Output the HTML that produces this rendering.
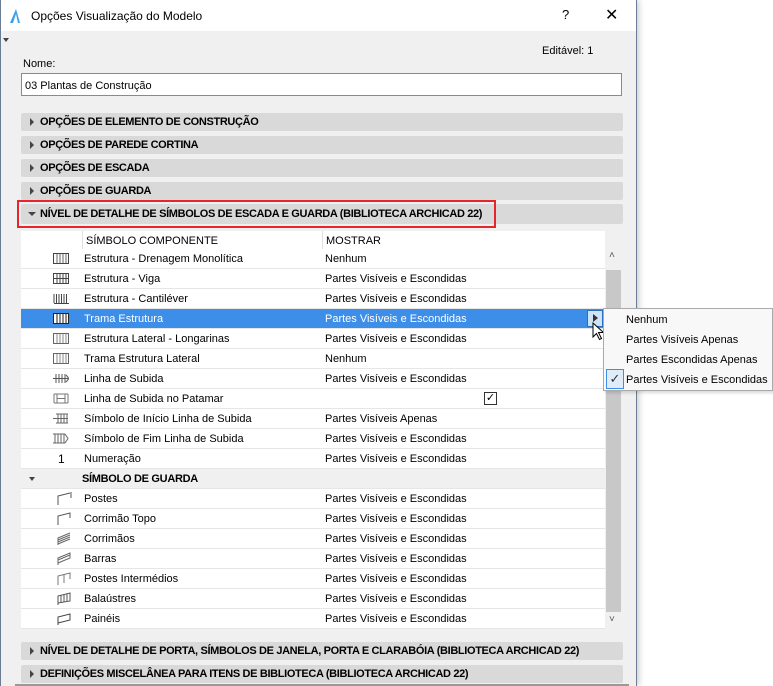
<!DOCTYPE html>
<html><head><meta charset="utf-8"><style>
*{margin:0;padding:0;box-sizing:border-box}
body{width:773px;height:686px;background:#fff;font-family:"Liberation Sans",sans-serif;font-size:11px;color:#000;position:relative;overflow:hidden}
.win{position:absolute;left:0;top:0;width:637px;height:686px;background:#f0f0f0;border-left:1px solid #6a7d95;border-right:1px solid #6a7d95;box-shadow:2px 0 6px rgba(0,0,0,.2)}
.title{position:absolute;left:0;top:0;width:635px;height:31px;background:#fff;font-size:12px}
.abs{position:absolute;white-space:nowrap}
.sec{position:absolute;left:20px;width:602px;height:18px;background:#d9d9d9;border-radius:2px;font-weight:bold;font-size:11px;line-height:19px;padding-left:19px;letter-spacing:-0.35px}
.sec:before{content:"";position:absolute;left:9px;top:5px;border-left:4px solid #444;border-top:4px solid transparent;border-bottom:4px solid transparent}
.sec.open:before{left:7px;top:8px;border-top:4px solid #444;border-left:4px solid transparent;border-right:4px solid transparent;border-bottom:0}
.row{position:absolute;left:20px;width:584px;height:20px;background:#fff;border-bottom:1px solid #e6e6e6;line-height:21px}
.row .n{position:absolute;left:63px}
.row .v{position:absolute;left:304px}
.row .ic{position:absolute;left:32px;top:4px;width:16px;height:11px}
.sel{background:#3d8ee8;color:#fff}
</style></head><body>
<div class="win">
<div class="title">
 <svg class="abs" style="left:7px;top:8px" width="14" height="16"><path d="M2 15 L8 1 L12 15 Z" fill="#3aa0e8"/><path d="M5 15 L8 6 L10 15Z" fill="#fff"/></svg>
 <div class="abs" style="left:30px;top:9px">Opções Visualização do Modelo</div>
 <div class="abs" style="left:561px;top:7px;font-size:13px">?</div>
 <div class="abs" style="left:604px;top:5px;font-size:16px">✕</div>
</div>
<div class="abs" style="left:2px;top:38px;border-top:4px solid #444;border-left:3px solid transparent;border-right:3px solid transparent"></div>
<div class="abs" style="left:541px;top:45px">Editável: 1</div>
<div class="abs" style="left:22px;top:58px">Nome:</div>
<div class="abs" style="left:20px;top:73px;width:601px;height:23px;background:#fff;border:1px solid #8a8a8a;padding:6px 0 0 3px">03 Plantas de Construção</div>
<div class="sec" style="top:113px">OPÇÕES DE ELEMENTO DE CONSTRUÇÃO</div>
<div class="sec" style="top:136px">OPÇÕES DE PAREDE CORTINA</div>
<div class="sec" style="top:159px">OPÇÕES DE ESCADA</div>
<div class="sec" style="top:182px">OPÇÕES DE GUARDA</div>
<div class="sec open" style="top:204px;height:20px;line-height:21px">NÍVEL DE DETALHE DE SÍMBOLOS DE ESCADA E GUARDA (BIBLIOTECA ARCHICAD 22)</div>
<div class="abs" style="left:16px;top:200px;width:479px;height:28px;border:2px solid #e8252a"></div>
<div class="abs" style="left:20px;top:231px;width:584px;height:398px;background:#fff"></div>
<div class="abs" style="left:20px;top:231px;width:584px;height:18px;background:#fff;line-height:20px"><span class="abs" style="left:61px;border-left:1px solid #e0e0e0;padding-left:3px">SÍMBOLO COMPONENTE</span><span class="abs" style="left:301px;border-left:1px solid #e0e0e0;padding-left:3px">MOSTRAR</span></div>
<div class="abs" style="left:604px;top:249px;width:16px;height:380px;background:#f0f0f0"></div>
<div class="abs" style="left:605px;top:270px;width:15px;height:342px;background:#c8c8c8"></div>
<div class="abs" style="left:608px;top:250px;font-size:10px;color:#555">˄</div>
<div class="abs" style="left:608px;top:614px;font-size:10px;color:#555">˅</div>

<div class="row" style="top:249px"><svg class="ic"><rect x="0.5" y="0.5" width="15" height="10" fill="none" stroke="#444"/><path d="M4 1v9M7 1v9M10 1v9M13 1v9" stroke="#666"/></svg><span class="n">Estrutura - Drenagem Monolítica</span><span class="v">Nenhum</span></div>
<div class="row" style="top:269px"><svg class="ic"><rect x="0.5" y="0.5" width="15" height="10" fill="none" stroke="#444"/><path d="M4 1v9M7 1v9M10 1v9M13 1v9M0 5.5h16" stroke="#444"/></svg><span class="n">Estrutura - Viga</span><span class="v">Partes Visíveis e Escondidas</span></div>
<div class="row" style="top:289px"><svg class="ic"><path d="M1 1v9M3.5 1v9M6 1v9M8.5 1v9M11 1v9M13.5 1v9M1 10.5h15" stroke="#444"/></svg><span class="n">Estrutura - Cantiléver</span><span class="v">Partes Visíveis e Escondidas</span></div>
<div class="row sel" style="top:309px"><svg class="ic"><rect x="0.5" y="0.5" width="15" height="10" fill="#fff" stroke="#222"/><path d="M4 1v9M7 1v9M10 1v9M13 1v9" stroke="#222"/></svg><span class="n">Trama Estrutura</span><span class="v">Partes Visíveis e Escondidas</span>
 <span class="abs" style="left:566px;top:1px;width:16px;height:17px;background:#cfe3f7;border:1px solid #2a6fc4"></span><span class="abs" style="left:572px;top:5px;border-left:5px solid #333;border-top:4px solid transparent;border-bottom:4px solid transparent"></span></div>
<div class="row" style="top:329px"><svg class="ic"><rect x="0.5" y="0.5" width="15" height="10" fill="none" stroke="#666"/><path d="M4 1v9M7 1v9M10 1v9M13 1v9" stroke="#888"/></svg><span class="n">Estrutura Lateral - Longarinas</span><span class="v">Partes Visíveis e Escondidas</span></div>
<div class="row" style="top:349px"><svg class="ic"><rect x="0.5" y="0.5" width="15" height="10" fill="none" stroke="#666"/><path d="M4 1v9M7 1v9M10 1v9M13 1v9" stroke="#888"/></svg><span class="n">Trama Estrutura Lateral</span><span class="v">Nenhum</span></div>
<div class="row" style="top:369px"><svg class="ic"><path d="M3 1v9M6 1v9M9 1v9M12 1v9M0 5.5h15M13 2l3 3.5-3 3.5" stroke="#555" fill="none"/></svg><span class="n">Linha de Subida</span><span class="v">Partes Visíveis e Escondidas</span></div>
<div class="row" style="top:389px"><svg class="ic"><path d="M1 1v9M4 1v9M12 1v9M15 1v9M1 1h14M1 10h14M4 5.5h8" stroke="#777" fill="none"/></svg><span class="n">Linha de Subida no Patamar</span><span class="abs" style="left:463px;top:3px;width:13px;height:13px;border:1px solid #333;font-size:11px;line-height:11px;text-align:center">✓</span></div>
<div class="row" style="top:409px"><svg class="ic"><path d="M5 1v9M8 1v9M11 1v9M14 1v9M3 1h12M3 10h12M0 5.5h15" stroke="#666" fill="none"/></svg><span class="n">Símbolo de Início Linha de Subida</span><span class="v">Partes Visíveis Apenas</span></div>
<div class="row" style="top:429px"><svg class="ic"><path d="M2 1v9M5 1v9M8 1v9M11 1v9M0 1h12M0 10h12M12 1l3 4.5-3 4.5" stroke="#666" fill="none"/></svg><span class="n">Símbolo de Fim Linha de Subida</span><span class="v">Partes Visíveis e Escondidas</span></div>
<div class="row" style="top:449px"><span class="abs" style="left:37px;font-size:12px">1</span><span class="n">Numeração</span><span class="v">Partes Visíveis e Escondidas</span></div>
<div class="row" style="top:469px;background:#f0f0f0;font-weight:bold;letter-spacing:-0.3px"><span class="abs" style="left:8px;top:8px;border-top:4px solid #444;border-left:3px solid transparent;border-right:3px solid transparent"></span><span class="abs" style="left:61px">SÍMBOLO DE GUARDA</span></div>
<div class="row" style="top:489px"><svg class="ic" style="left:36px;top:3px;height:13px"><path d="M1 13V4L13 1M14 0v6" stroke="#555" fill="none"/></svg><span class="n">Postes</span><span class="v">Partes Visíveis e Escondidas</span></div>
<div class="row" style="top:509px"><svg class="ic" style="left:36px;top:3px;height:13px"><path d="M1 13V4L13 1v5" stroke="#555" fill="none"/></svg><span class="n">Corrimão Topo</span><span class="v">Partes Visíveis e Escondidas</span></div>
<div class="row" style="top:529px"><svg class="ic" style="left:36px;top:3px;height:13px"><path d="M1 13V6L13 1M1 8L13 3M1 10L13 5M1 12L13 7" stroke="#666" fill="none"/></svg><span class="n">Corrimãos</span><span class="v">Partes Visíveis e Escondidas</span></div>
<div class="row" style="top:549px"><svg class="ic" style="left:36px;top:3px;height:13px"><path d="M1 13V6L13 1v5L1 11M1 8L13 3" stroke="#666" fill="none"/></svg><span class="n">Barras</span><span class="v">Partes Visíveis e Escondidas</span></div>
<div class="row" style="top:569px"><svg class="ic" style="left:36px;top:3px;height:13px"><path d="M1 13V4L13 1v6M7 3v8" stroke="#777" fill="none"/></svg><span class="n">Postes Intermédios</span><span class="v">Partes Visíveis e Escondidas</span></div>
<div class="row" style="top:589px"><svg class="ic" style="left:36px;top:3px;height:13px"><path d="M1 13V4L13 1v8L1 11M4 3v8M7 2.5v8M10 2v8" stroke="#555" fill="none"/></svg><span class="n">Balaústres</span><span class="v">Partes Visíveis e Escondidas</span></div>
<div class="row" style="top:609px"><svg class="ic" style="left:36px;top:3px;height:13px"><path d="M1 13V5L13 2v6L1 11" stroke="#444" fill="none"/></svg><span class="n">Painéis</span><span class="v">Partes Visíveis e Escondidas</span></div>

<div class="sec" style="top:642px">NÍVEL DE DETALHE DE PORTA, SÍMBOLOS DE JANELA, PORTA E CLARABÓIA (BIBLIOTECA ARCHICAD 22)</div>
<div class="sec" style="top:665px">DEFINIÇÕES MISCELÂNEA PARA ITENS DE BIBLIOTECA (BIBLIOTECA ARCHICAD 22)</div>
<div class="abs" style="left:14px;top:684px;width:614px;height:2px;background:#999"></div>
</div>
<svg class="abs" style="left:592px;top:322px" width="14" height="20"><path d="M1 1v14l3.5-3.5 3 6 2-1-3-6h5z" fill="#fff" stroke="#000"/></svg>
<div class="abs" style="left:603px;top:308px;width:170px;height:83px;background:#f8f8f8;border:1px solid #aaa;box-shadow:2px 2px 3px rgba(0,0,0,.15)">
 <div class="abs" style="left:22px;top:5px">Nenhum</div>
 <div class="abs" style="left:22px;top:25px">Partes Visíveis Apenas</div>
 <div class="abs" style="left:22px;top:45px">Partes Escondidas Apenas</div>
 <div class="abs" style="left:2px;top:60px;width:18px;height:20px;border:1px solid #3d8ee8;background:#e0ecf8;text-align:center;line-height:18px;font-size:13px;color:#333">✓</div>
 <div class="abs" style="left:22px;top:65px">Partes Visíveis e Escondidas</div>
</div>
</body></html>
